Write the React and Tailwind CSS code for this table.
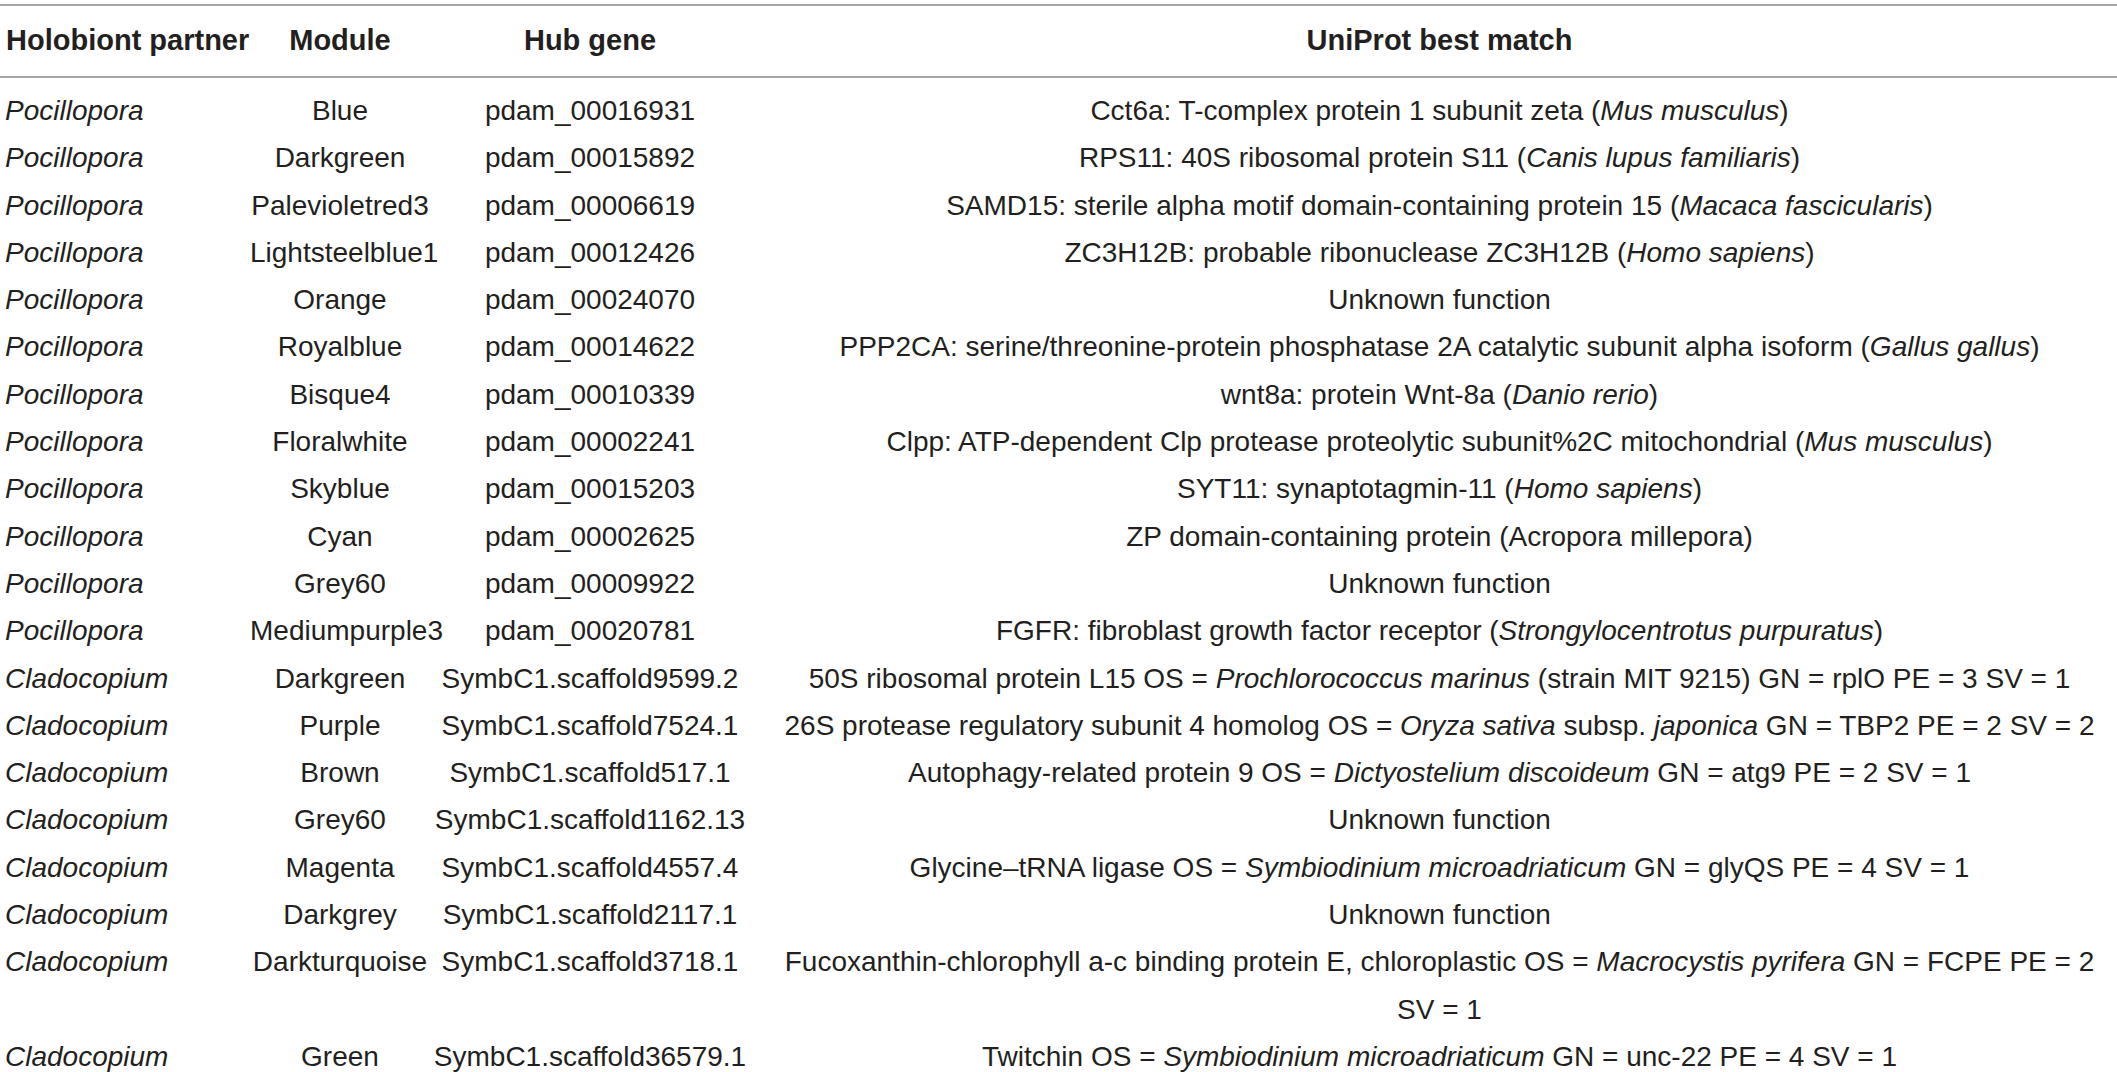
const rows = [
  ['Pocillopora', 'Blue', 'pdam_00016931', <>Cct6a: T-complex protein 1 subunit zeta (<i>Mus musculus</i>)</>],
  ['Pocillopora', 'Darkgreen', 'pdam_00015892', <>RPS11: 40S ribosomal protein S11 (<i>Canis lupus familiaris</i>)</>],
  ['Pocillopora', 'Palevioletred3', 'pdam_00006619', <>SAMD15: sterile alpha motif domain-containing protein 15 (<i>Macaca fascicularis</i>)</>],
  ['Pocillopora', 'Lightsteelblue1', 'pdam_00012426', <>ZC3H12B: probable ribonuclease ZC3H12B (<i>Homo sapiens</i>)</>],
  ['Pocillopora', 'Orange', 'pdam_00024070', <>Unknown function</>],
  ['Pocillopora', 'Royalblue', 'pdam_00014622', <>PPP2CA: serine/threonine-protein phosphatase 2A catalytic subunit alpha isoform (<i>Gallus gallus</i>)</>],
  ['Pocillopora', 'Bisque4', 'pdam_00010339', <>wnt8a: protein Wnt-8a (<i>Danio rerio</i>)</>],
  ['Pocillopora', 'Floralwhite', 'pdam_00002241', <>Clpp: ATP-dependent Clp protease proteolytic subunit%2C mitochondrial (<i>Mus musculus</i>)</>],
  ['Pocillopora', 'Skyblue', 'pdam_00015203', <>SYT11: synaptotagmin-11 (<i>Homo sapiens</i>)</>],
  ['Pocillopora', 'Cyan', 'pdam_00002625', <>ZP domain-containing protein (Acropora millepora)</>],
  ['Pocillopora', 'Grey60', 'pdam_00009922', <>Unknown function</>],
  ['Pocillopora', 'Mediumpurple3', 'pdam_00020781', <>FGFR: fibroblast growth factor receptor (<i>Strongylocentrotus purpuratus</i>)</>],
  ['Cladocopium', 'Darkgreen', 'SymbC1.scaffold9599.2', <>50S ribosomal protein L15 OS = <i>Prochlorococcus marinus</i> (strain MIT 9215) GN = rplO PE = 3 SV = 1</>],
  ['Cladocopium', 'Purple', 'SymbC1.scaffold7524.1', <>26S protease regulatory subunit 4 homolog OS = <i>Oryza sativa</i> subsp. <i>japonica</i> GN = TBP2 PE = 2 SV = 2</>],
  ['Cladocopium', 'Brown', 'SymbC1.scaffold517.1', <>Autophagy-related protein 9 OS = <i>Dictyostelium discoideum</i> GN = atg9 PE = 2 SV = 1</>],
  ['Cladocopium', 'Grey60', 'SymbC1.scaffold1162.13', <>Unknown function</>],
  ['Cladocopium', 'Magenta', 'SymbC1.scaffold4557.4', <>Glycine–tRNA ligase OS = <i>Symbiodinium microadriaticum</i> GN = glyQS PE = 4 SV = 1</>],
  ['Cladocopium', 'Darkgrey', 'SymbC1.scaffold2117.1', <>Unknown function</>],
  ['Cladocopium', 'Darkturquoise', 'SymbC1.scaffold3718.1', <>Fucoxanthin-chlorophyll a-c binding protein E, chloroplastic OS = <i>Macrocystis pyrifera</i> GN = FCPE PE = 2<br />SV = 1</>],
  ['Cladocopium', 'Green', 'SymbC1.scaffold36579.1', <>Twitchin OS = <i>Symbiodinium microadriaticum</i> GN = unc-22 PE = 4 SV = 1</>],
];

const cols = 'grid grid-cols-[250px_180px_320px_1fr]';

export default function App() {
  return (
    <div className="w-[2117px] h-[1072px] overflow-hidden bg-white text-[#231f20] font-['Liberation_Sans',Arial,sans-serif]">
      <div className="mt-[4px] border-t-2 border-[#a6a6a6]" />
      {/* Header */}
      <div className={`${cols} h-[72px] items-center text-[29px] font-bold border-b-2 border-[#a6a6a6]`}>
        <div className="pl-[6px] whitespace-nowrap">Holobiont partner</div>
        <div className="text-center">Module</div>
        <div className="text-center">Hub gene</div>
        <div className="text-center pl-[12px]">UniProt best match</div>
      </div>

      {/* Body */}
      <div className="pt-[9px] text-[28px] leading-[47.3px]">
        {rows.map((r, i) => (
          <div key={i} className={cols}>
            <div className="pl-[5px] italic">{r[0]}</div>
            <div className="text-center whitespace-nowrap">{r[1]}</div>
            <div className="text-center whitespace-nowrap">{r[2]}</div>
            <div className="text-center pl-[12px]">{r[3]}</div>
          </div>
        ))}
      </div>
    </div>
  );
}
